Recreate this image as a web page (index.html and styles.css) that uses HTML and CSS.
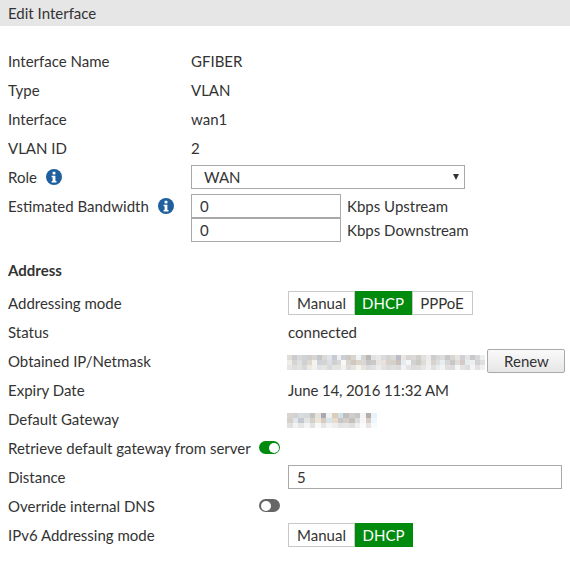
FILE: index.html
```html
<!DOCTYPE html>
<html lang="en">
<head>
<meta charset="utf-8">
<title>Edit Interface</title>
<link rel="stylesheet" href="styles.css">
</head>
<body>
<div class="title">Edit Interface</div>
<section class="section-top">
  <div class="row"><span class="label-a">Interface Name</span><span>GFIBER</span></div>
  <div class="row"><span class="label-a">Type</span><span>VLAN</span></div>
  <div class="row"><span class="label-a">Interface</span><span>wan1</span></div>
  <div class="row"><span class="label-a">VLAN ID</span><span>2</span></div>
  <div class="row"><span class="label-a label-icon">Role <svg class="info info-role" viewBox="0 0 16 16"><circle cx="8" cy="8" r="8" fill="#1f5f9e"/><rect x="6.6" y="2.8" width="2.8" height="2.6" fill="#fff"/><path d="M5.6 6.7h3.8v5.2h1.1v1.5H5.6v-1.5h1v-3.7h-1z" fill="#fff"/></svg></span>
    <div class="select">WAN<span class="arrow"></span></div></div>
  <div class="row-bw">
    <span class="label-a label-icon">Estimated Bandwidth <svg class="info info-bw" viewBox="0 0 16 16"><circle cx="8" cy="8" r="8" fill="#1f5f9e"/><rect x="6.6" y="2.8" width="2.8" height="2.6" fill="#fff"/><path d="M5.6 6.7h3.8v5.2h1.1v1.5H5.6v-1.5h1v-3.7h-1z" fill="#fff"/></svg></span>
    <div class="bw-grid">
      <div class="input bw-input">0</div><span>Kbps Upstream</span>
      <div class="input bw-input">0</div><span>Kbps Downstream</span>
    </div>
  </div>
</section>
<h2 class="heading">Address</h2>
<section>
  <div class="row"><span class="label-b">Addressing mode</span>
    <div class="seg"><span class="seg-item seg-manual">Manual</span><span class="seg-item seg-dhcp seg-on">DHCP</span><span class="seg-item seg-pppoe">PPPoE</span></div></div>
  <div class="row"><span class="label-b">Status</span><span>connected</span></div>
  <div class="row"><span class="label-b">Obtained IP/Netmask</span>
    <svg class="blur blur-ip" viewBox="0 0 40 3" preserveAspectRatio="none" shape-rendering="crispEdges">
      <g><rect x="0" fill="#e0dcd8"/><rect x="1" fill="#c8cbcf"/><rect x="2" fill="#d8d8d6"/><rect x="3" fill="#cfd2d6"/><rect x="4" fill="#d0cfcd"/><rect x="5" fill="#d8d6d2"/><rect x="6" fill="#c3c6ca"/><rect x="7" fill="#dcd8d2"/><rect x="8" fill="#e0e3e8"/><rect x="9" fill="#c8ccd2"/><rect x="10" fill="#eef0f0"/><rect x="11" fill="#c9cfd4"/><rect x="12" fill="#ccc9c2"/><rect x="13" fill="#d8d5cf"/><rect x="14" fill="#f0f4f6"/><rect x="15" fill="#d5d3d0"/><rect x="16" fill="#b8b8b8"/><rect x="17" fill="#e4e2e0"/><rect x="18" fill="#e8e8e8"/><rect x="19" fill="#dcdada"/><rect x="20" fill="#d4d2d0"/><rect x="21" fill="#dbd9d8"/><rect x="22" fill="#bcbcc8"/><rect x="23" fill="#e8e6e4"/><rect x="24" fill="#d8d5d2"/><rect x="25" fill="#dcdad8"/><rect x="26" fill="#d0cecb"/><rect x="27" fill="#e2e0de"/><rect x="28" fill="#ececec"/><rect x="29" fill="#cfcdcc"/><rect x="30" fill="#dad8d6"/><rect x="31" fill="#dcdcdc"/><rect x="32" fill="#c8c6c6"/><rect x="33" fill="#d8d6d2"/><rect x="34" fill="#e8e4e0"/><rect x="35" fill="#cfd0d4"/><rect x="36" fill="#e4e4e4"/><rect x="37" fill="#c8c8cc"/><rect x="38" fill="#d8d8d8"/><rect x="39" fill="#eceff0"/></g>
      <g transform="translate(0 1)"><rect x="0" fill="#f0ece6"/><rect x="1" fill="#d5d5d5"/><rect x="2" fill="#e0e0e0"/><rect x="3" fill="#cfd0d4"/><rect x="4" fill="#ddd8d0"/><rect x="5" fill="#f5f3ee"/><rect x="6" fill="#cfd2d6"/><rect x="7" fill="#d5d3cf"/><rect x="8" fill="#dce0e4"/><rect x="9" fill="#cfd0d2"/><rect x="10" fill="#d8d8d8"/><rect x="11" fill="#f8f8f8"/><rect x="12" fill="#d8d5cf"/><rect x="13" fill="#d0c8bc"/><rect x="14" fill="#dcd4c8"/><rect x="15" fill="#dbd8d4"/><rect x="16" fill="#c8c6c4"/><rect x="17" fill="#cccac8"/><rect x="18" fill="#e6e5e4"/><rect x="19" fill="#e8e2da"/><rect x="20" fill="#d8d2cc"/><rect x="21" fill="#d4d0cc"/><rect x="22" fill="#ccc0bc"/><rect x="23" fill="#e4ecf2"/><rect x="24" fill="#f4f6f8"/><rect x="25" fill="#d4d2d0"/><rect x="26" fill="#ccc8c2"/><rect x="27" fill="#dedcd8"/><rect x="28" fill="#eeeeee"/><rect x="29" fill="#d6d2ce"/><rect x="30" fill="#e0dedc"/><rect x="31" fill="#e6eff2"/><rect x="32" fill="#d8d6d4"/><rect x="33" fill="#c8c6c6"/><rect x="34" fill="#e0dcd8"/><rect x="35" fill="#d4c8c8"/><rect x="36" fill="#e4eef0"/><rect x="37" fill="#f2f0ee"/><rect x="38" fill="#d0d2d4"/><rect x="39" fill="#dee0e0"/></g>
      <g transform="translate(0 2)"><rect x="0" fill="#e8e6e2"/><rect x="1" fill="#dcdee0"/><rect x="2" fill="#e4e2de"/><rect x="3" fill="#d6d8da"/><rect x="4" fill="#ece8e2"/><rect x="5" fill="#f4f2ee"/><rect x="6" fill="#dfe4e8"/><rect x="7" fill="#e8e6e2"/><rect x="8" fill="#d8dadc"/><rect x="9" fill="#e6e4e2"/><rect x="10" fill="#e4e4e4"/><rect x="11" fill="#f2f2f0"/><rect x="12" fill="#dcdcda"/><rect x="13" fill="#e6e4e0"/><rect x="14" fill="#f4f6ee"/><rect x="15" fill="#e6e4e2"/><rect x="16" fill="#dcdcdc"/><rect x="17" fill="#e2e2e2"/><rect x="18" fill="#ececec"/><rect x="19" fill="#e4e2e0"/><rect x="20" fill="#dedcda"/><rect x="21" fill="#e0e0e0"/><rect x="22" fill="#dcdcdc"/><rect x="23" fill="#f0f2f4"/><rect x="24" fill="#e6e4e2"/><rect x="25" fill="#dedcdc"/><rect x="26" fill="#e0dedc"/><rect x="27" fill="#e6e6e6"/><rect x="28" fill="#f0f0f0"/><rect x="29" fill="#e2e0de"/><rect x="30" fill="#e8eeee"/><rect x="31" fill="#f2f4f4"/><rect x="32" fill="#e0dede"/><rect x="33" fill="#dcdcdc"/><rect x="34" fill="#f4f6f6"/><rect x="35" fill="#e4e4e4"/><rect x="36" fill="#dedede"/><rect x="37" fill="#f4f4f4"/><rect x="38" fill="#e2e2e2"/><rect x="39" fill="#f0f0f0"/></g>
    </svg>
    <button class="renew" type="button">Renew</button></div>
  <div class="row"><span class="label-b">Expiry Date</span><span class="date">June 14, 2016 11:32 AM</span></div>
  <div class="row"><span class="label-b">Default Gateway</span>
    <svg class="blur blur-gw" viewBox="0 0 16 3" preserveAspectRatio="none" shape-rendering="crispEdges">
      <g><rect x="0" fill="#d8d4d0"/><rect x="1" fill="#cfd2d4"/><rect x="2" fill="#d8dcdc"/><rect x="3" fill="#d4d8da"/><rect x="4" fill="#c4c2be"/><rect x="5" fill="#e4e4dc"/><rect x="6" fill="#a8a8b4"/><rect x="7" fill="#f0f0ee"/><rect x="8" fill="#dcccbc"/><rect x="9" fill="#cfe0e8"/><rect x="10" fill="#c0bebc"/><rect x="11" fill="#d0cecc"/><rect x="12" fill="#c4c6c8"/><rect x="13" fill="#f4f4f4"/><rect x="14" fill="#b8aca8"/><rect x="15" fill="#e4f4fa"/></g>
      <g transform="translate(0 1)"><rect x="0" fill="#d4d0cc"/><rect x="1" fill="#e0e6ea"/><rect x="2" fill="#c4c8d0"/><rect x="3" fill="#e2e4e4"/><rect x="4" fill="#d4d0cc"/><rect x="5" fill="#ede4da"/><rect x="6" fill="#d8ccc0"/><rect x="7" fill="#d8e4ec"/><rect x="8" fill="#e8dccc"/><rect x="9" fill="#c8c6c8"/><rect x="10" fill="#d4cec8"/><rect x="11" fill="#c4c0bc"/><rect x="12" fill="#dcdcdc"/><rect x="13" fill="#f6f6f6"/><rect x="14" fill="#d8ccc8"/><rect x="15" fill="#eef8fc"/></g>
      <g transform="translate(0 2)"><rect x="0" fill="#e2e0de"/><rect x="1" fill="#f0f2f4"/><rect x="2" fill="#e4e6e8"/><rect x="3" fill="#f4f4f2"/><rect x="4" fill="#e4e2e0"/><rect x="5" fill="#f8f8f8"/><rect x="6" fill="#e8e6e4"/><rect x="7" fill="#f2f4f6"/><rect x="8" fill="#f0eeec"/><rect x="9" fill="#e4e4e4"/><rect x="10" fill="#e8e6e4"/><rect x="11" fill="#e0dede"/><rect x="12" fill="#f0f0f0"/><rect x="13" fill="#fafafa"/><rect x="14" fill="#e8e4e2"/><rect x="15" fill="#f6fbfd"/></g>
    </svg></div>
  <div class="row"><span class="label-toggle">Retrieve default gateway from server</span><span class="toggle toggle-on"></span></div>
  <div class="row"><span class="label-b">Distance</span><div class="input dist-input">5</div></div>
  <div class="row"><span class="label-toggle">Override internal DNS</span><span class="toggle toggle-off"></span></div>
  <div class="row"><span class="label-b">IPv6 Addressing mode</span>
    <div class="seg"><span class="seg-item seg-manual">Manual</span><span class="seg-item seg-dhcp seg-on">DHCP</span></div></div>
</section>
</body>
</html>
```

FILE: styles.css
```css
html, body { margin: 0; padding: 0; background: #fff; }
body { width: 570px; height: 570px; overflow: hidden; font: 15px/20px Lato, "Liberation Sans", sans-serif; color: #333; }
.title { height: 26px; line-height: 27px; padding-left: 8px; background: #e6e6e6; }
.section-top { padding-top: 20px; }
.row { display: flex; align-items: center; height: 29px; padding-left: 8px; }
.row-bw { display: flex; padding: 3px 0 0 8px; }
.label-a { flex: 0 0 183px; }
.label-b { flex: 0 0 280px; }
.label-toggle { flex: 0 0 251px; }
.label-icon { display: flex; align-items: center; height: 24px; white-space: pre; }
.info { width: 16px; height: 16px; }
.info-role { margin-left: 5px; }
.info-bw { margin-left: 5px; }
.select { position: relative; box-sizing: border-box; width: 274px; height: 24px; margin-top: 1px; line-height: 22px; padding-left: 12px; border: 1px solid #a9a9a9; }
.arrow { position: absolute; right: 5px; top: 8px; border: 3.5px solid transparent; border-top: 6px solid #333; border-bottom: 0; }
.bw-grid { display: grid; grid-template-columns: 150px auto; column-gap: 6px; align-items: center; }
.input { box-sizing: border-box; height: 24px; line-height: 22px; padding-left: 8px; border: 1px solid #a9a9a9; }
.dist-input { width: 274px; }
.heading { margin: 18px 0 0; padding-left: 8px; height: 20px; font: 700 15px/20px Lato, "Liberation Sans", sans-serif; }
.heading + section { padding-top: 8px; }
.seg { display: flex; height: 24px; }
.seg-item { box-sizing: border-box; height: 24px; line-height: 22px; text-align: center; border: 1px solid #c8c8c8; }
.seg-manual { width: 67px; }
.seg-dhcp { width: 57px; padding-right: 1px; }
.seg-dhcp:last-child { width: 58px; }
.seg-pppoe { width: 61px; padding-right: 1px; }
.seg-on { background: #008a0e; border-color: #008a0e; color: #fff; }
.date { letter-spacing: -0.14px; }
.blur { display: block; }
.blur rect { width: 1px; height: 1px; }
.blur-ip { width: 198px; height: 15px; margin: 4px 0 0 -1px; }
.blur-gw { width: 90px; height: 15px; margin: 4px 0 0 -1px; }
.renew { box-sizing: border-box; width: 78px; height: 24px; margin-left: 2px; padding: 0 0 0 1px; font: inherit; color: #333; border: 1px solid #a9a9a9; border-radius: 2px; background: linear-gradient(#fafafa, #e6e6e6); }
.toggle { position: relative; box-sizing: border-box; width: 21px; height: 13px; border-radius: 7px; }
.toggle::after { content: ""; position: absolute; top: 1.5px; width: 10px; height: 10px; border-radius: 50%; background: #fff; }
.toggle-on { background: #008a0e; }
.toggle-on::after { right: 1.5px; }
.toggle-off { background: #666; }
.toggle-off::after { left: 1.5px; }
```
